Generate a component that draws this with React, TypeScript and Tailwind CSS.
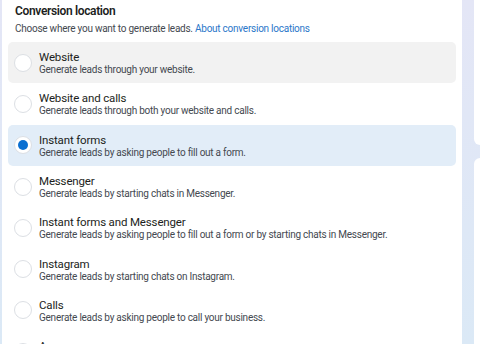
import React, { useState } from 'react';

interface LocationOption {
  id: string;
  title: string;
  description: string;
}

const OPTIONS: LocationOption[] = [
  { id: 'website', title: 'Website', description: 'Generate leads through your website.' },
  { id: 'website-calls', title: 'Website and calls', description: 'Generate leads through both your website and calls.' },
  { id: 'instant-forms', title: 'Instant forms', description: 'Generate leads by asking people to fill out a form.' },
  { id: 'messenger', title: 'Messenger', description: 'Generate leads by starting chats in Messenger.' },
  { id: 'forms-messenger', title: 'Instant forms and Messenger', description: 'Generate leads by asking people to fill out a form or by starting chats in Messenger.' },
  { id: 'instagram', title: 'Instagram', description: 'Generate leads by starting chats on Instagram.' },
  { id: 'calls', title: 'Calls', description: 'Generate leads by asking people to call your business.' },
  { id: 'app', title: 'App', description: 'Generate leads through your app.' },
];

const Radio: React.FC<{ checked: boolean }> = ({ checked }) => (
  <span className="w-[18px] h-[18px] shrink-0 rounded-full bg-white border border-[#dcdfe4] flex items-center justify-center">
    {checked && <span className="w-[10px] h-[10px] rounded-full bg-[#0a6fd1]" />}
  </span>
);

export default function App() {
  const [selected, setSelected] = useState('instant-forms');
  const hovered = 'website';

  return (
    <div className="w-[480px] h-[344px] overflow-hidden flex bg-gradient-to-b from-[#e4e6f6] to-[#dbe9f6] font-['Roboto',sans-serif]">
      <div className="w-[2px] shrink-0" />
      <div className="w-[460px] shrink-0 bg-white px-[6px] pt-[2px]">
        <h2 className="px-[7px] text-[12px] leading-[18px] font-semibold tracking-[-0.35px] text-[#1c1e21]">Conversion location</h2>
        <p className="px-[7px] mt-[2px] text-[10px] leading-[14px] tracking-[-0.25px] text-[#444950]">
          Choose where you want to generate leads.{' '}
          <span className="text-[#2a77c9]">About conversion locations</span>
        </p>
        <div className="mt-[6px] flex flex-col">
          {OPTIONS.map(opt => {
            const isSelected = selected === opt.id;
            const bg = isSelected ? 'bg-[#e2edf8]' : opt.id === hovered ? 'bg-[#f2f2f2]' : 'bg-white';
            return (
              <button
                key={opt.id}
                type="button"
                onClick={() => setSelected(opt.id)}
                className={`w-[448px] h-[41.3px] shrink-0 rounded-[5px] flex items-center gap-[7px] px-[6px] text-left ${bg}`}
              >
                <Radio checked={isSelected} />
                <span className="flex flex-col pt-[1px] whitespace-nowrap">
                  <span className="text-[11.5px] leading-[14px] tracking-[-0.15px] text-[#1c1e21]">{opt.title}</span>
                  <span className="text-[10px] leading-[12px] tracking-[-0.25px] text-[#444950]">{opt.description}</span>
                </span>
              </button>
            );
          })}
        </div>
      </div>
      <div className="w-[12px] shrink-0" />
      <div className="flex-1 flex flex-col gap-[13px]">
        <div className="h-[145px] bg-white rounded-bl-[6px]" />
        <div className="flex-1 bg-white rounded-tl-[6px]" />
      </div>
    </div>
  );
}
